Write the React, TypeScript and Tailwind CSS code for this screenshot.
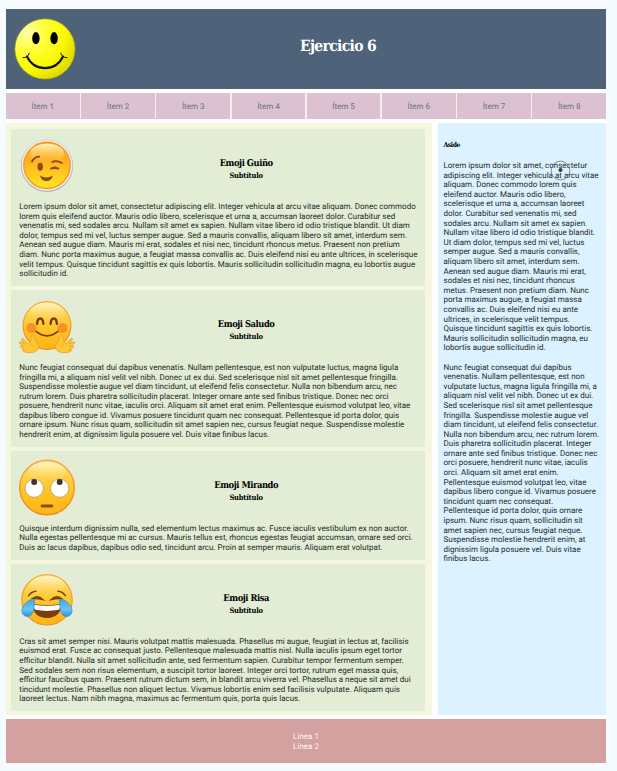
import type { ReactNode } from "react";

const loremArticle = [
  "Lorem ipsum dolor sit amet, consectetur adipiscing elit. Integer vehicula at arcu vitae aliquam. Donec commodo",
  "lorem quis eleifend auctor. Mauris odio libero, scelerisque et urna a, accumsan laoreet dolor. Curabitur sed",
  "venenatis mi, sed sodales arcu. Nullam sit amet ex sapien. Nullam vitae libero id odio tristique blandit. Ut diam",
  "dolor, tempus sed mi vel, luctus semper augue. Sed a mauris convallis, aliquam libero sit amet, interdum sem.",
  "Aenean sed augue diam. Mauris mi erat, sodales et nisi nec, tincidunt rhoncus metus. Praesent non pretium",
  "diam. Nunc porta maximus augue, a feugiat massa convallis ac. Duis eleifend nisi eu ante ultrices, in scelerisque",
  "velit tempus. Quisque tincidunt sagittis ex quis lobortis. Mauris sollicitudin sollicitudin magna, eu lobortis augue",
  "sollicitudin id.",
];

const nuncArticle = [
  "Nunc feugiat consequat dui dapibus venenatis. Nullam pellentesque, est non vulputate luctus, magna ligula",
  "fringilla mi, a aliquam nisl velit vel nibh. Donec ut ex dui. Sed scelerisque nisl sit amet pellentesque fringilla.",
  "Suspendisse molestie augue vel diam tincidunt, ut eleifend felis consectetur. Nulla non bibendum arcu, nec",
  "rutrum lorem. Duis pharetra sollicitudin placerat. Integer ornare ante sed finibus tristique. Donec nec orci",
  "posuere, hendrerit nunc vitae, iaculis orci. Aliquam sit amet erat enim. Pellentesque euismod volutpat leo, vitae",
  "dapibus libero congue id. Vivamus posuere tincidunt quam nec consequat. Pellentesque id porta dolor, quis",
  "ornare ipsum. Nunc risus quam, sollicitudin sit amet sapien nec, cursus feugiat neque. Suspendisse molestie",
  "hendrerit enim, at dignissim ligula posuere vel. Duis vitae finibus lacus.",
];

const quisqueArticle = [
  "Quisque interdum dignissim nulla, sed elementum lectus maximus ac. Fusce iaculis vestibulum ex non auctor.",
  "Nulla egestas pellentesque mi ac cursus. Mauris tellus est, rhoncus egestas feugiat accumsan, ornare sed orci.",
  "Duis ac lacus dapibus, dapibus odio sed, tincidunt arcu. Proin at semper mauris. Aliquam erat volutpat.",
];

const crasArticle = [
  "Cras sit amet semper nisi. Mauris volutpat mattis malesuada. Phasellus mi augue, feugiat in lectus at, facilisis",
  "euismod erat. Fusce ac consequat justo. Pellentesque malesuada mattis nisl. Nulla iaculis ipsum eget tortor",
  "efficitur blandit. Nulla sit amet sollicitudin ante, sed fermentum sapien. Curabitur tempor fermentum semper.",
  "Sed sodales sem non risus elementum, a suscipit tortor laoreet. Integer orci tortor, rutrum eget massa quis,",
  "efficitur faucibus quam. Praesent rutrum dictum sem, in blandit arcu viverra vel. Phasellus a neque sit amet dui",
  "tincidunt molestie. Phasellus non aliquet lectus. Vivamus lobortis enim sed facilisis vulputate. Aliquam quis",
  "laoreet lectus. Nam nibh magna, maximus ac fermentum quis, porta quis lacus.",
];

const asideLorem = [
  "Lorem ipsum dolor sit amet, consectetur",
  "adipiscing elit. Integer vehicula at arcu vitae",
  "aliquam. Donec commodo lorem quis",
  "eleifend auctor. Mauris odio libero,",
  "scelerisque et urna a, accumsan laoreet",
  "dolor. Curabitur sed venenatis mi, sed",
  "sodales arcu. Nullam sit amet ex sapien.",
  "Nullam vitae libero id odio tristique blandit.",
  "Ut diam dolor, tempus sed mi vel, luctus",
  "semper augue. Sed a mauris convallis,",
  "aliquam libero sit amet, interdum sem.",
  "Aenean sed augue diam. Mauris mi erat,",
  "sodales et nisi nec, tincidunt rhoncus",
  "metus. Praesent non pretium diam. Nunc",
  "porta maximus augue, a feugiat massa",
  "convallis ac. Duis eleifend nisi eu ante",
  "ultrices, in scelerisque velit tempus.",
  "Quisque tincidunt sagittis ex quis lobortis.",
  "Mauris sollicitudin sollicitudin magna, eu",
  "lobortis augue sollicitudin id.",
];

const asideNunc = [
  "Nunc feugiat consequat dui dapibus",
  "venenatis. Nullam pellentesque, est non",
  "vulputate luctus, magna ligula fringilla mi, a",
  "aliquam nisl velit vel nibh. Donec ut ex dui.",
  "Sed scelerisque nisl sit amet pellentesque",
  "fringilla. Suspendisse molestie augue vel",
  "diam tincidunt, ut eleifend felis consectetur.",
  "Nulla non bibendum arcu, nec rutrum lorem.",
  "Duis pharetra sollicitudin placerat. Integer",
  "ornare ante sed finibus tristique. Donec nec",
  "orci posuere, hendrerit nunc vitae, iaculis",
  "orci. Aliquam sit amet erat enim.",
  "Pellentesque euismod volutpat leo, vitae",
  "dapibus libero congue id. Vivamus posuere",
  "tincidunt quam nec consequat.",
  "Pellentesque id porta dolor, quis ornare",
  "ipsum. Nunc risus quam, sollicitudin sit",
  "amet sapien nec, cursus feugiat neque.",
  "Suspendisse molestie hendrerit enim, at",
  "dignissim ligula posuere vel. Duis vitae",
  "finibus lacus.",
];

function Lines({ lines }: { lines: string[] }) {
  return (
    <p className="whitespace-nowrap">
      {lines.map((line) => (
        <span key={line} className="block">
          {line}
        </span>
      ))}
    </p>
  );
}

function Smiley() {
  return (
    <svg className="size-[62px]" viewBox="-31 -31 62 62">
      <defs>
        <radialGradient id="smile" cx="0.2" cy="0.22" r="0.85">
          <stop offset="0" stopColor="#fffcb0" />
          <stop offset="0.35" stopColor="#ffff3c" />
          <stop offset="0.75" stopColor="#fbf900" />
          <stop offset="1" stopColor="#e2dc00" />
        </radialGradient>
      </defs>
      <circle r="30.2" fill="url(#smile)" stroke="#8d8b2c" strokeWidth="0.7" />
      <ellipse cx="-9.1" cy="-10.8" rx="3.7" ry="6.1" />
      <ellipse cx="9.1" cy="-10.8" rx="3.7" ry="6.1" />
      <g fill="none" stroke="#111" strokeLinecap="round">
        <path d="M-18 7.5C-10.5 23 10.5 23 18 7.5" strokeWidth="2.1" />
        <path d="M-22 8.7Q-17.3 9-15.7 4.2M22 8.7Q17.3 9 15.7 4.2" strokeWidth="1" />
      </g>
    </svg>
  );
}

function EmojiFrame({ children }: { children: ReactNode }) {
  return (
    <svg className="h-16 w-14 shrink-0 overflow-visible" viewBox="-28 -32 56 64">
      <defs>
        <linearGradient id="gold" x1="0" y1="0" x2="0" y2="1">
          <stop offset="0" stopColor="#ffe98c" />
          <stop offset="0.3" stopColor="#fed14a" />
          <stop offset="0.6" stopColor="#fec324" />
          <stop offset="1" stopColor="#fdb515" />
        </linearGradient>
        <linearGradient id="amber" x1="0" y1="0" x2="0" y2="1">
          <stop offset="0" stopColor="#ffa826" />
          <stop offset="0.4" stopColor="#ffb01f" />
          <stop offset="0.7" stopColor="#ffcb20" />
          <stop offset="1" stopColor="#ffe526" />
        </linearGradient>
        <linearGradient id="shine" x1="0" y1="0" x2="0" y2="1">
          <stop offset="0" stopColor="#fff5cb" stopOpacity="0.95" />
          <stop offset="1" stopColor="#ffd35a" stopOpacity="0" />
        </linearGradient>
        <linearGradient id="rim" x1="0" y1="0" x2="0" y2="1">
          <stop offset="0" stopColor="#fba93a" />
          <stop offset="1" stopColor="#ef8a1c" />
        </linearGradient>
        <linearGradient id="tear" x1="0" y1="0" x2="0" y2="1">
          <stop offset="0" stopColor="#3fa9e6" />
          <stop offset="0.6" stopColor="#6cc4f2" />
          <stop offset="1" stopColor="#2b92d6" />
        </linearGradient>
      </defs>
      {children}
    </svg>
  );
}

function Wink() {
  return (
    <EmojiFrame>
      <g transform="translate(0 -4.7)">
        <circle cy="0.5" r="26.1" fill="#b4b4b0" />
        <circle r="25.4" fill="#eeeeec" />
        <circle r="23.2" fill="url(#amber)" stroke="#f79420" strokeWidth="1.3" />
        <ellipse cy="-12" rx="17" ry="9.5" fill="url(#shine)" />
        <ellipse cx="-6.8" cy="1.5" rx="2.7" ry="4" fill="#8a4a12" />
        <g fill="none" stroke="#8a4a12" strokeLinecap="round">
          <path d="M-15-3.8Q-12.5-8.5-7.8-8.6M5.4-3.5Q10-5.4 14.8-2.2" strokeWidth="1.8" />
          <path d="M3.4 3.5Q7.5.2 12 3.5Q7.5 2.5 3.4 3.5Z" strokeWidth="1.5" />
        </g>
        <path d="M-7 10.2Q-.7 14 5.8 10.2Q4.5 15.8-.7 15.8Q-5.5 15.8-7 10.2Z" fill="#8a4a12" />
      </g>
    </EmojiFrame>
  );
}

function Hand() {
  return (
    <g>
      <path
        d="M-16.5 27.3C-20 27.7-23.8 26.5-24.5 25.2C-24.7 24.2-23.5 24-22.4 24.2C-25 23.4-27 22-26.5 20.9C-26.1 20.2-24.7 20.8-23.2 21.2C-26 19.5-28.4 17.8-27.7 16.7C-27 15.9-24.5 17.7-22 18.7C-24.3 16.5-26.1 13.6-25 13C-23.9 12.7-21.5 16.4-18.5 18.1C-17 18.3-16.4 14-15.4 10.2C-14.8 8.7-12.9 9.3-12.7 11.5C-12.4 14-11 16-9.1 18.8C-6.6 22.7-10.2 27.4-16.5 27.3Z"
        fill="#fec632"
        stroke="#e99a28"
        strokeWidth="0.8"
      />
      <path d="M-17 18.4Q-14.5 19.3-14 21.6" fill="none" stroke="#f1a22c" strokeWidth="0.8" />
    </g>
  );
}

function Hug() {
  return (
    <EmojiFrame>
      <g transform="translate(0 -5.7)">
        <circle r="23.9" cy="0.2" fill="url(#gold)" stroke="url(#rim)" strokeWidth="1.2" />
        <ellipse cy="-13.5" rx="17" ry="9" fill="url(#shine)" />
        <circle cx="-15.5" cy="2.7" r="5" fill="#f58a25" opacity="0.85" />
        <circle cx="15.5" cy="2.7" r="5" fill="#f58a25" opacity="0.85" />
        <g fill="none" stroke="#78390f" strokeLinecap="round">
          <path d="M-9.9-1.4C-9.4-8.6-4.2-8.6-3.6-1.4M3.6-1.4C4.2-8.6 9.4-8.6 9.9-1.4" strokeWidth="2.3" />
          <path d="M-11 6.1Q0 15 11 6.1" strokeWidth="1.6" />
        </g>
        <Hand />
        <g transform="scale(-1 1)">
          <Hand />
        </g>
      </g>
    </EmojiFrame>
  );
}

function Rolling() {
  return (
    <EmojiFrame>
      <g transform="translate(0 -4.5)">
        <circle r="27.3" fill="url(#gold)" stroke="url(#rim)" strokeWidth="1.5" />
        <ellipse cy="-15.5" rx="19" ry="10" fill="url(#shine)" />
        <g fill="#fff" stroke="#b28f6a" strokeWidth="0.7">
          <circle cx="-12.8" cy="0.7" r="9.1" />
          <circle cx="12.7" cy="0.7" r="9.1" />
        </g>
        <g fill="#3d3532">
          <circle cx="-12.8" cy="-5.4" r="3" />
          <circle cx="12.7" cy="-5.4" r="3" />
        </g>
        <rect x="-6.3" y="17.1" width="12.4" height="2.9" rx="1.2" fill="#8b4a16" />
      </g>
    </EmojiFrame>
  );
}

function Tear() {
  return (
    <path
      d="M-12.5-.4C-16.5-1.1-24.7 4-25.1 10.5C-25.2 14.5-22.3 17-19 16.7C-12.6 16-12.7 6-12.5-.4Z"
      fill="url(#tear)"
      stroke="#3390cb"
      strokeWidth="0.7"
    />
  );
}

function Laugh() {
  return (
    <EmojiFrame>
      <g transform="translate(0 -4.2)">
        <circle r="25.2" fill="url(#gold)" stroke="url(#rim)" strokeWidth="1.2" />
        <ellipse cy="-14" rx="18" ry="9.5" fill="url(#shine)" />
        <g fill="none" stroke="#78410f" strokeLinecap="round">
          <path d="M-18.5-4Q-15.5-8.3-11-8.5M18.5-4Q15.5-8.3 11-8.5" strokeWidth="1.4" />
          <path d="M-14.5-1.3Q-9-5-4.3-.3Q-9-1.6-14.5-1.3ZM14.5-1.3Q9-5 4.3-.3Q9-1.6 14.5-1.3Z" strokeWidth="1.5" />
        </g>
        <path d="M-14.5 4.3Q0 6.3 14.5 4.3C14.3 13.5 8.8 18.2 0 18.2S-14.3 13.5-14.5 4.3Z" fill="#7d3b10" />
        <path d="M-13.5 5Q0 7 13.5 5Q13.4 8.6 11.8 10Q0 12.2-11.8 10Q-13.4 8.6-13.5 5Z" fill="#fff" />
        <Tear />
        <g transform="scale(-1 1)">
          <Tear />
        </g>
      </g>
    </EmojiFrame>
  );
}

const articles = [
  { title: "Emoji Guiño", icon: <Wink />, lines: loremArticle },
  { title: "Emoji Saludo", icon: <Hug />, lines: nuncArticle },
  { title: "Emoji Mirando", icon: <Rolling />, lines: quisqueArticle },
  { title: "Emoji Risa", icon: <Laugh />, lines: crasArticle },
];

const serif = "font-['DejaVu_Serif_Condensed','DejaVu_Serif',serif] font-bold [font-stretch:condensed]";

export default function App() {
  return (
    <div className="h-[771px] w-[617px] overflow-hidden bg-[#f5fbff] pt-[8.8px] pl-[6px] font-[Roboto,sans-serif] text-[8px] leading-[9.6px] text-[#252a28] [text-rendering:geometricPrecision]">
      <div className="flex w-[600px] flex-col gap-[4.5px] bg-white">
        <header className="flex h-20 items-center bg-[#4e627a] pl-[8px]">
          <Smiley />
          <h1 className={`${serif} flex-1 pr-[6px] pb-[5px] text-center text-[15.5px] leading-5 tracking-[-0.65px] text-white`}>
            Ejercicio 6
          </h1>
        </header>

        <nav className="grid h-[25.5px] grid-cols-8 gap-[1.5px] bg-[#f5edf3]">
          {[1, 2, 3, 4, 5, 6, 7, 8].map((n) => (
            <a key={n} className="flex items-center justify-center bg-[#dcc2d0] pt-[1.4px] text-[#62708c]">
              Ítem {n}
            </a>
          ))}
        </nav>

        <div className="flex h-[591.5px] justify-between">
          <main className="flex w-[426px] flex-col gap-1 bg-[#f5f6df] py-[6px] pr-[7px] pl-[5px]">
            {articles.map((a) => (
              <article key={a.title} className="bg-[#e3ecd5] pt-2 pr-2 pb-[7.5px] pl-[8.3px]">
                <div className="flex h-[64.7px] items-center">
                  {a.icon}
                  <div className={`${serif} flex-1 pb-[0.6px] text-center text-black`}>
                    <h2 className="text-[9.3px] leading-[12px] tracking-[-0.45px]">{a.title}</h2>
                    <h3 className="text-[7.5px] leading-[11px] tracking-[-0.2px]">Subtítulo</h3>
                  </div>
                </div>
                <Lines lines={a.lines} />
              </article>
            ))}
          </main>

          <aside className="relative w-[168.5px] bg-[#ddf2ff] pt-[17.7px] pl-[6px]">
            <h4 className={`${serif} mb-[10.5px] text-[6.8px] tracking-[-0.45px] text-black`}>Aside</h4>
            <div className="flex flex-col gap-[9.6px]">
              <Lines lines={asideLorem} />
              <Lines lines={asideNunc} />
            </div>
            <svg className="absolute top-[36.4px] left-[112.8px] size-[21px]" viewBox="0 0 21 21">
              <circle cx="10.5" cy="10.5" r="9.4" fill="none" stroke="#6b767f" strokeWidth="0.8" />
              <circle cx="10.5" cy="10" r="2" fill="#333a40" />
            </svg>
          </aside>
        </div>

        <footer className="flex h-[43.5px] items-center justify-center bg-[#d3a19f] pt-[1.2px] text-[#fff5f4]">
          <p>
            Línea 1<br />
            Línea 2
          </p>
        </footer>
      </div>
    </div>
  );
}
